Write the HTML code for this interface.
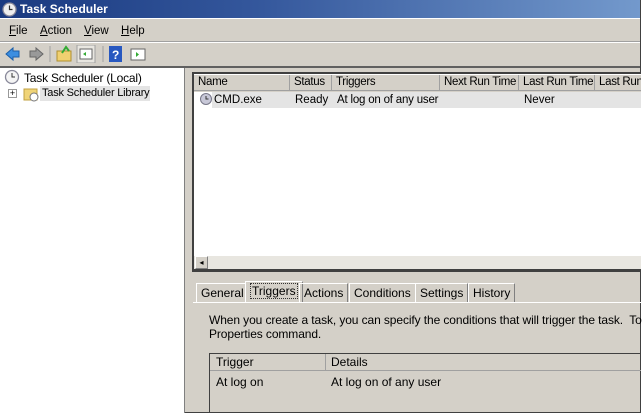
<!DOCTYPE html>
<html><head><style>
*{margin:0;padding:0;box-sizing:border-box}
body{width:644px;height:417px;overflow:hidden;background:#fff;font-family:"Liberation Sans",sans-serif;font-size:11px;color:#000;position:relative;white-space:nowrap}
.a{position:absolute}
.win{left:0;top:0;width:641px;height:413px;background:#d4d0c8;border-right:1px solid #404040;border-bottom:1px solid #404040}
.title{left:0;top:0;width:640px;height:18px;background:linear-gradient(90deg,#1a3a80 0%,#34579c 40%,#7399cc 100%);color:#fff;font-weight:bold;font-size:12px;line-height:18px;padding-left:20px}
.menu span{position:absolute;top:25px;font-size:11.5px}
.hd{background:#d4d0c8;border-right:1px solid #a0a0a0;height:16px;line-height:15px;padding-left:4px;position:absolute;top:0;border-bottom:1px solid #a0a0a0;overflow:hidden;letter-spacing:-0.3px}
.tab{position:absolute;top:283px;height:19px;line-height:18px;padding:0 4px;border-left:1px solid #fff;border-right:1px solid #808080;border-top:1px solid #fff;font-size:12px}
</style></head><body>
<div class="a win"></div>
<div class="a title">Task Scheduler</div>
<svg class="a" style="left:2px;top:2px" width="15" height="15"><circle cx="7.5" cy="7.5" r="6.5" fill="#eee" stroke="#889" stroke-width="1.3"/><path d="M7.5 3.5V7.5H10.5" stroke="#333" fill="none" stroke-width="1.2"/></svg>
<div class="a" style="left:0;top:18px;width:640px;height:1px;background:#fff"></div>
<div class="menu">
<span style="left:9px"><u>F</u>ile</span><span style="left:40px"><u>A</u>ction</span><span style="left:84px"><u>V</u>iew</span><span style="left:121px"><u>H</u>elp</span></div>
<div class="a" style="left:0;top:41px;width:640px;height:1px;background:#a0a0a0"></div>
<div class="a" style="left:0;top:42px;width:640px;height:1px;background:#fff"></div>
<svg class="a" style="left:4px;top:45px" width="150" height="18">
<path d="M2 9L9 3V6H15V12H9V15Z" fill="#3c8ee0" stroke="#1c5ea8"/>
<path d="M39 9L32 3V6H26V12H32V15Z" fill="#999" stroke="#666"/>
<line x1="46" y1="1" x2="46" y2="17" stroke="#a0a0a0"/>
<rect x="53" y="6" width="14" height="10" fill="#f0d070" stroke="#b09030"/><path d="M58 8L62 2L65 6" stroke="#3a3" stroke-width="2" fill="none"/>
<rect x="73" y="0" width="18" height="18" fill="#e8e6e0" stroke="#a0a0a0"/><rect x="76" y="4" width="12" height="10" fill="#fff" stroke="#666"/><path d="M82 7L79 9L82 11Z" fill="#3a3"/>
<line x1="99" y1="1" x2="99" y2="17" stroke="#a0a0a0"/>
<rect x="105" y="1" width="13" height="16" fill="#2858c0"/><text x="108" y="14" fill="#fff" font-size="12" font-weight="bold">?</text>
<rect x="127" y="4" width="14" height="11" fill="#fff" stroke="#666"/><path d="M132 7L135 9.5L132 12Z" fill="#3a3"/>
</svg>
<div class="a" style="left:0;top:66px;width:640px;height:2px;background:#606060"></div>
<div class="a" style="left:0;top:68px;width:185px;height:345px;background:#fff;border-right:1px solid #808080"></div>
<svg class="a" style="left:4px;top:69px" width="16" height="16"><circle cx="8" cy="8" r="6.5" fill="#f4f4f4" stroke="#889" stroke-width="1.3"/><path d="M8 4V8H11" stroke="#333" fill="none"/></svg>
<div class="a" style="left:24px;top:71px;font-size:12px;letter-spacing:-0.2px">Task Scheduler (Local)</div>
<div class="a" style="left:8px;top:89px;width:9px;height:9px;border:1px solid #999;font-size:9px;line-height:7px;text-align:center">+</div>
<svg class="a" style="left:23px;top:86px" width="16" height="16"><rect x="1" y="3" width="13" height="11" fill="#f0d478" stroke="#c0a040"/><circle cx="11" cy="11" r="4" fill="#fff" stroke="#777"/></svg>
<div class="a" style="left:40px;top:86px;width:110px;height:15px;background:#e4e4e4;font-size:11px;line-height:15px;padding-left:2px;letter-spacing:-0.2px;overflow:hidden">Task Scheduler Library</div>
<div class="a" style="left:192px;top:72px;width:449px;height:198px;background:#fff;border:2px solid #404040;border-right:none"></div>
<div class="a" style="left:194px;top:75px;width:447px;height:17px;background:#d4d0c8;font-size:11.5px;overflow:hidden">
<div class="hd" style="left:0;width:96px">Name</div>
<div class="hd" style="left:96px;width:42px">Status</div>
<div class="hd" style="left:138px;width:108px">Triggers</div>
<div class="hd" style="left:246px;width:79px">Next Run Time</div>
<div class="hd" style="left:325px;width:76px">Last Run Time</div>
<div class="hd" style="left:401px;width:60px">Last Run</div>
</div>
<div class="a" style="left:212px;top:92px;width:429px;height:16px;background:#e4e4e4"></div>
<svg class="a" style="left:199px;top:92px" width="14" height="14"><circle cx="7" cy="7" r="5.5" fill="#c8c8d8" stroke="#778"/><path d="M7 4V7H9.5" stroke="#333" fill="none"/></svg>
<div class="a" style="left:214px;top:94px;font-size:11.5px">CMD.exe</div>
<div class="a" style="left:295px;top:94px;font-size:11.5px">Ready</div>
<div class="a" style="left:337px;top:94px;font-size:11.5px;letter-spacing:-0.2px">At log on of any user</div>
<div class="a" style="left:524px;top:94px;font-size:11.5px">Never</div>
<div class="a" style="left:194px;top:255px;width:447px;height:14px;background:#e8e6e0;border-top:1px solid #fff"></div>
<div class="a" style="left:195px;top:256px;width:13px;height:13px;background:#d4d0c8;border:1px solid #fff;border-right-color:#808080;border-bottom-color:#808080;font-size:8px;line-height:11px;text-align:center">◂</div>
<div class="a" style="left:192px;top:269px;width:449px;height:3px;background:#404040"></div>
<div class="a" style="left:193px;top:302px;width:448px;height:1px;background:#fff"></div>
<div class="tab" style="left:196px">General</div>
<div class="tab" style="left:245px;top:281px;height:21px;background:#d4d0c8"><span style="border:1px dotted #333;padding:0 1px">Triggers</span></div>
<div class="tab" style="left:299px">Actions</div>
<div class="tab" style="left:349px">Conditions</div>
<div class="tab" style="left:415px">Settings</div>
<div class="tab" style="left:468px">History</div>
<div class="a" style="left:209px;top:313px;font-size:12px;line-height:14px;letter-spacing:-0.1px">When you create a task, you can specify the conditions that will trigger the task.&nbsp; To c<br>Properties command.</div>
<div class="a" style="left:209px;top:353px;width:432px;height:60px;border-top:1px solid #404040;border-left:1px solid #404040"></div>
<div class="a" style="left:210px;top:354px;width:431px;height:17px;border-bottom:1px solid #a0a0a0;font-size:12px;line-height:17px">
<span class="a" style="left:6px">Trigger</span><span class="a" style="left:115px;top:0;width:1px;height:16px;background:#a0a0a0"></span><span class="a" style="left:121px">Details</span></div>
<div class="a" style="left:216px;top:375px;font-size:12px">At log on</div>
<div class="a" style="left:331px;top:375px;font-size:12px">At log on of any user</div>
</body></html>
